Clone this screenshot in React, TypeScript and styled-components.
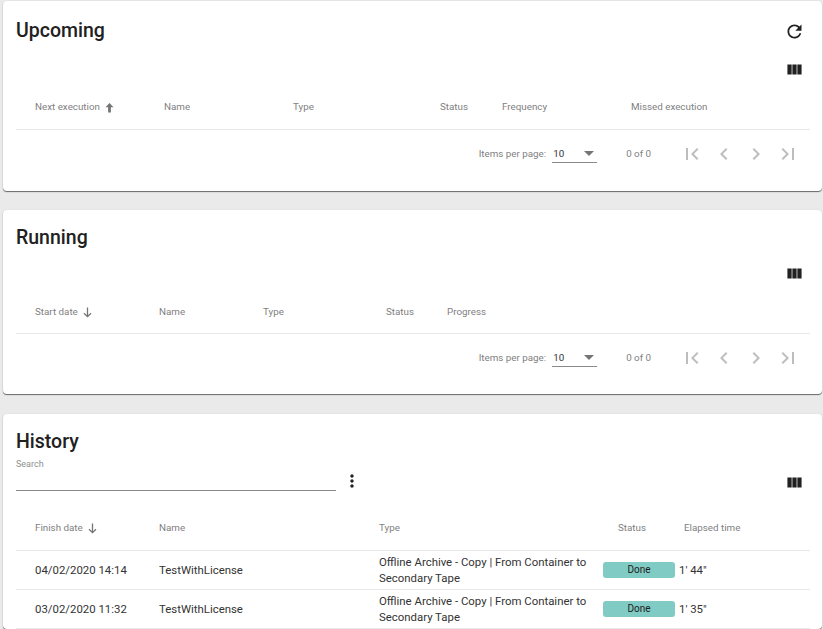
import React from "react";
import styled, { createGlobalStyle } from "styled-components";

const Global = createGlobalStyle`
  html, body { margin: 0; padding: 0; background: #eaeaea; overflow: hidden; }
  body { font-family: Roboto, "Liberation Sans", sans-serif; }
`;

const Page = styled.div`
  height: 629px;
  overflow: hidden;
  padding: 1px 1px 0 3px;
  box-sizing: border-box;
  display: flex;
  flex-direction: column;
  gap: 19px;
`;

const Card = styled.section<{ $height?: number; $top: number; $after?: number }>`
  flex: none;
  box-sizing: border-box;
  height: ${(p) => (p.$height ? `${p.$height}px` : "auto")};
  padding: ${(p) => p.$top}px 12px 0 13px;
  margin-bottom: ${(p) => p.$after ?? 0}px;
  background: #fff;
  border-radius: 4px;
  box-shadow: 0 1px 1px rgba(0, 0, 0, 0.55), 0 0 2px rgba(0, 0, 0, 0.08);
`;

const TitleRow = styled.div`
  height: 28px;
  display: flex;
  align-items: center;
  justify-content: space-between;
`;

const Title = styled.h2`
  margin: 0;
  font-size: 19.5px;
  line-height: 28px;
  font-weight: 500;
  color: #212121;
`;

const IconSlot = styled.div`
  width: 24px;
  height: 24px;
  display: flex;
  align-items: center;
  justify-content: center;
  margin-right: 4px;
  color: #212121;
`;

const ToolRow = styled.div<{ $height: number }>`
  height: ${(p) => p.$height}px;
  display: flex;
  align-items: center;
  justify-content: flex-end;
`;

const SearchRow = styled.div`
  height: 56px;
  display: flex;
  justify-content: space-between;
  align-items: flex-start;
`;

const SearchGroup = styled.div`
  display: flex;
  align-items: flex-end;
`;

const SearchField = styled.div`
  width: 320px;
  height: 33px;
  margin-top: 2px;
  box-sizing: border-box;
  border-bottom: 1px solid #8a8a8a;
  font-size: 9px;
  line-height: 12px;
  color: #8f8f8f;
`;

const DotsSlot = styled.div`
  width: 32px;
  height: 24px;
  display: flex;
  align-items: center;
  justify-content: center;
  margin-bottom: -2px;
  color: #212121;
`;

const ColumnSlot = styled(IconSlot)<{ $offset: number }>`
  margin-top: ${(p) => p.$offset}px;
`;

const HeaderRow = styled.div<{ $cols: string; $height: number; $pad?: number }>`
  display: grid;
  grid-template-columns: ${(p) => p.$cols};
  align-items: end;
  height: ${(p) => p.$height - (p.$pad ?? 15)}px;
  padding: 0 0 ${(p) => p.$pad ?? 15}px 19px;
  border-bottom: 1px solid #e8e8e8;
  font-size: 9.8px;
  line-height: 14px;
  color: #7f7f7f;
`;

const HeaderCell = styled.div<{ $inset?: number }>`
  display: flex;
  align-items: center;
  gap: 5px;
  white-space: nowrap;
  padding-left: ${(p) => p.$inset ?? 0}px;
`;

const DataRow = styled.div<{ $cols: string }>`
  display: grid;
  grid-template-columns: ${(p) => p.$cols};
  align-items: center;
  height: 38px;
  padding-left: 19px;
  border-bottom: 1px solid #e8e8e8;
  font-size: 11.4px;
  line-height: 16px;
  color: #333;
`;

const StatusChip = styled.div`
  width: 72px;
  height: 16px;
  border-radius: 3px;
  background: #80cbc4;
  font-size: 10px;
  line-height: 16px;
  text-align: center;
  color: #212121;
`;

const Paginator = styled.div`
  height: 47px;
  display: flex;
  align-items: center;
  justify-content: flex-end;
  font-size: 9.8px;
  color: #7f7f7f;
`;

const PageLabel = styled.span`
  margin-right: 6px;
`;

const PageSelect = styled.div`
  width: 45px;
  height: 17px;
  box-sizing: border-box;
  border-bottom: 1px solid #8a8a8a;
  display: flex;
  align-items: center;
  justify-content: space-between;
  padding: 0 3px 1px 1px;
  color: #333;
  margin-top: 1px;
`;

const Caret = styled.span`
  width: 0;
  height: 0;
  border-left: 5px solid transparent;
  border-right: 5px solid transparent;
  border-top: 5px solid #757575;
`;

const RangeLabel = styled.span`
  margin: 0 25px 0 29px;
`;

const PagerButton = styled.div`
  width: 32px;
  height: 28px;
  display: flex;
  align-items: center;
  justify-content: center;
  color: rgba(0, 0, 0, 0.26);
`;

const PagerGroup = styled.div`
  display: flex;
  margin-right: 6px;
`;

const ArrowSlot = styled.div`
  display: flex;
  padding-left: 88px;
  color: #212121;
`;

const Svg = ({ d, size = 24 }: { d: string; size?: number }) => (
  <svg width={size} height={size} viewBox="0 0 24 24" fill="currentColor">
    <path d={d} />
  </svg>
);

const REFRESH = "M17.65 6.35C16.2 4.9 14.21 4 12 4c-4.42 0-7.99 3.58-7.99 8s3.57 8 7.99 8c3.73 0 6.84-2.55 7.73-6h-2.08c-.82 2.33-3.04 4-5.65 4-3.31 0-6-2.69-6-6s2.69-6 6-6c1.66 0 3.14.69 4.22 1.78L13 11h7V4l-2.35 2.35z";
const WEEK = "M2 5h6v14H2zM9 5h6v14H9zM16 5h6v14h-6z";
const VERT = "M12 8c1.1 0 2-.9 2-2s-.9-2-2-2-2 .9-2 2 .9 2 2 2zm0 2c-1.1 0-2 .9-2 2s.9 2 2 2 2-.9 2-2-.9-2-2-2zm0 6c-1.1 0-2 .9-2 2s.9 2 2 2 2-.9 2-2-.9-2-2-2z";
const PAGER = [
  "M18.41 16.59L13.82 12l4.59-4.59L17 6l-6 6 6 6zM6 6h2v12H6z",
  "M15.41 7.41L14 6l-6 6 6 6 1.41-1.41L10.83 12z",
  "M10 6L8.59 7.41 13.17 12l-4.58 4.59L10 18l6-6z",
  "M5.59 7.41L10.18 12l-4.59 4.59L7 18l6-6-6-6zM16 6h2v12h-2z",
];

const ColumnsIcon = () => <Svg d={WEEK} size={17} />;

const SortArrow = ({ up }: { up?: boolean }) => (
  <svg width="9" height="11" viewBox="0 0 9 11">
    {up ? (
      <path d="M4.5 1L.5 5.2h2.6V10.5h2.8V5.2h2.6z" fill="#757575" />
    ) : (
      <path d="M4.5 .5V9.5M1 6.2L4.5 9.7 8 6.2" fill="none" stroke="#757575" strokeWidth="1.3" />
    )}
  </svg>
);

const RowArrow = () => (
  <svg width="15" height="14" viewBox="0 0 15 14" fill="none" stroke="currentColor" strokeWidth="1.2">
    <path d="M.5 7h13.5M8 1l6 6-6 6" />
  </svg>
);

const Pager = () => (
  <Paginator>
    <PageLabel>Items per page:</PageLabel>
    <PageSelect>
      <span>10</span>
      <Caret />
    </PageSelect>
    <RangeLabel>0 of 0</RangeLabel>
    <PagerGroup>
      {PAGER.map((d) => (
        <PagerButton key={d}>
          <Svg d={d} size={24} />
        </PagerButton>
      ))}
    </PagerGroup>
  </Paginator>
);

const UPCOMING = "129px 129px 147px 62px 129px 1fr";
const RUNNING = "124px 104px 123px 61px 1fr";
const HISTORY = "124px 220px 224px 81px 84px 1fr";
const HISTORY_ROW = "124px 220px 224px 76px 89px 1fr";

const rows = [
  ["04/02/2020 14:14", "1' 44\""],
  ["03/02/2020 11:32", "1' 35\""],
];

export default function App() {
  return (
    <Page>
      <Global />
      <Card $height={190} $top={16}>
        <TitleRow>
          <Title>Upcoming</Title>
          <IconSlot>
            <Svg d={REFRESH} size={21} />
          </IconSlot>
        </TitleRow>
        <ToolRow $height={24}>
          <ColumnSlot $offset={25}>
            <ColumnsIcon />
          </ColumnSlot>
        </ToolRow>
        <HeaderRow $cols={UPCOMING} $height={60}>
          <HeaderCell>
            Next execution <SortArrow up />
          </HeaderCell>
          <HeaderCell>Name</HeaderCell>
          <HeaderCell>Type</HeaderCell>
          <HeaderCell>Status</HeaderCell>
          <HeaderCell>Frequency</HeaderCell>
          <HeaderCell>Missed execution</HeaderCell>
        </HeaderRow>
        <Pager />
      </Card>

      <Card $height={184} $top={14} $after={1}>
        <TitleRow>
          <Title>Running</Title>
        </TitleRow>
        <ToolRow $height={23}>
          <ColumnSlot $offset={20}>
            <ColumnsIcon />
          </ColumnSlot>
        </ToolRow>
        <HeaderRow $cols={RUNNING} $height={58} $pad={14}>
          <HeaderCell>
            Start date <SortArrow />
          </HeaderCell>
          <HeaderCell>Name</HeaderCell>
          <HeaderCell>Type</HeaderCell>
          <HeaderCell>Status</HeaderCell>
          <HeaderCell>Progress</HeaderCell>
        </HeaderRow>
        <Pager />
      </Card>

      <Card $top={14}>
        <TitleRow>
          <Title>History</Title>
        </TitleRow>
        <SearchRow>
          <SearchGroup>
            <SearchField>Search</SearchField>
            <DotsSlot>
              <Svg d={VERT} size={20} />
            </DotsSlot>
          </SearchGroup>
          <ColumnSlot $offset={14}>
            <ColumnsIcon />
          </ColumnSlot>
        </SearchRow>
        <HeaderRow $cols={HISTORY} $height={38}>
          <HeaderCell>
            Finish date <SortArrow />
          </HeaderCell>
          <HeaderCell>Name</HeaderCell>
          <HeaderCell>Type</HeaderCell>
          <HeaderCell $inset={15}>Status</HeaderCell>
          <HeaderCell>Elapsed time</HeaderCell>
        </HeaderRow>
        {rows.map(([date, elapsed]) => (
          <DataRow key={date} $cols={HISTORY_ROW}>
            <div>{date}</div>
            <div>TestWithLicense</div>
            <div>Offline Archive - Copy | From Container to Secondary Tape</div>
            <StatusChip>Done</StatusChip>
            <div>{elapsed}</div>
            <ArrowSlot>
              <RowArrow />
            </ArrowSlot>
          </DataRow>
        ))}
      </Card>
    </Page>
  );
}
